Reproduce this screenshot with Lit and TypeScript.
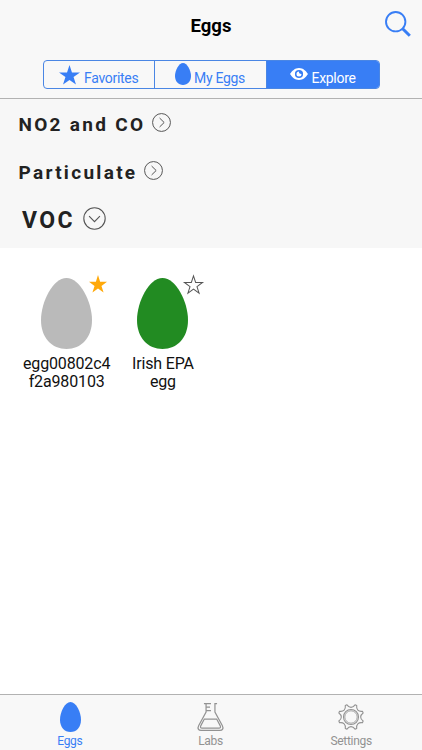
import { LitElement, html, svg, css } from "lit";
import { customElement, property } from "lit/decorators.js";

const EGG = "M25.5 0C39 0 51 24 51 42C51 60 40 71 25.5 71C11 71 0 60 0 42C0 24 12 0 25.5 0Z";

const polar = (r: number, deg: number) => {
  const a = (deg * Math.PI) / 180;
  return `${(14 + r * Math.cos(a)).toFixed(2)} ${(14 + r * Math.sin(a)).toFixed(2)}`;
};

// Eight blunt teeth joined by concave valleys.
const gearPath = () => {
  let d = "";
  for (let i = 0; i < 8; i++) {
    const t = 22.5 + i * 45;
    d += `${i ? "L" : "M"}${polar(12.8, t - 4)}L${polar(12.8, t + 4)}C${polar(9, t + 12)} ${polar(9, t + 33)} ${polar(12.8, t + 41)}`;
  }
  return d + "Z";
};

const STAR = "M10 0L12.36 7.1H20L13.85 11.5L16.18 18.6L10 14.25L3.82 18.6L6.15 11.5L0 7.1H7.64Z";

const glyphs: Record<string, { box: string; body: unknown }> = {
  egg: { box: "0 0 51 71", body: svg`<path d=${EGG} fill="currentColor"/>` },
  star: { box: "0 0 20 19", body: svg`<path d=${STAR} fill="currentColor"/>` },
  starOutline: {
    box: "-0.5 -1 21 20.5",
    body: svg`<path d=${STAR} fill="none" stroke="currentColor" stroke-width="1.1"/>`,
  },
  eye: {
    box: "0 0 18 12",
    body: svg`<path fill="currentColor" fill-rule="evenodd" d="M9 0C4.8 0 2 3 0 6C2 9 4.8 12 9 12S16 9 18 6C16 3 13.2 0 9 0ZM9 1.9A4.1 4.1 0 1 1 9 10.1A4.1 4.1 0 1 1 9 1.9Z"/><path fill="currentColor" d="M9 3.5C8.6 4.6 9.4 6 11.5 6A2.5 2.5 0 1 1 9 3.5Z"/>`,
  },
  search: {
    box: "0 0 26 26",
    body: svg`<g fill="none" stroke="currentColor"><circle cx="10.7" cy="10.7" r="9.7" stroke-width="1.9"/><path d="M17.7 17.7L24.8 24.8" stroke-width="3"/></g>`,
  },
  right: {
    box: "0 0 20 20",
    body: svg`<g fill="none" stroke="currentColor" stroke-width="1.05"><circle cx="10" cy="10" r="9.4"/><path d="M8 5.3L12.8 10L8 14.7"/></g>`,
  },
  down: {
    box: "0 0 20 20",
    body: svg`<g fill="none" stroke="currentColor" stroke-width="0.95"><circle cx="10" cy="10" r="9.3"/><path d="M5.3 8L10 12.8L14.7 8"/></g>`,
  },
  flask: {
    box: "0 0 28 28",
    body: svg`<g fill="none" stroke="currentColor" stroke-width="1.25"><path d="M7.2 .7H9.4V9L1.8 22.5C.2 25.5 1.5 27.4 4.3 27.4H23.7C26.5 27.4 27.8 25.5 26.2 22.5L18.6 9V.7H20.8"/><path d="M9.4 .7H14.5M9.4 4.2H13.5M9.4 7.7H14.5"/><path d="M7.6 16H20.4L24 22.6C24.8 24.3 24.3 25.2 22.8 25.2H5.2C3.7 25.2 3.2 24.3 4 22.6Z"/></g>`,
  },
  gear: {
    box: "0 0 28 28",
    body: svg`<g fill="none" stroke="currentColor" stroke-width="1.1" stroke-linejoin="round"><path d=${gearPath()}/><circle cx="14" cy="14" r="7.5"/><circle cx="14" cy="14" r="6.2" stroke-width="0.8"/></g>`,
  },
};

@customElement("ui-glyph")
class UiGlyph extends LitElement {
  @property() name = "egg";
  static styles = css`
    :host { display: block; flex: none; }
    .art { display: block; width: 100%; height: 100%; overflow: visible; }
  `;
  render() {
    const g = glyphs[this.name];
    return html`<svg class="art" viewBox=${g.box} preserveAspectRatio="none">${g.body}</svg>`;
  }
}

@customElement("egg-card")
class EggCard extends LitElement {
  @property() tone = "offline";
  @property({ type: Array }) lines: string[] = [];
  @property({ type: Boolean }) starred = false;
  static styles = css`
    :host { display: flex; flex-direction: column; align-items: center; width: 96.3px; }
    .picture { position: relative; width: 51px; height: 71px; }
    .egg { width: 51px; height: 71px; }
    .offline { color: #bababa; }
    .online { color: #228b22; }
    .star { position: absolute; left: 48px; top: -3px; width: 18px; height: 18px; color: #ffa90a; }
    .hollow { width: 19px; height: 19px; left: 47px; top: -3.5px; color: #555; }
    .name { margin-top: 6px; font-size: 16px; line-height: 18px; letter-spacing: -0.15px; text-align: center; white-space: nowrap; }
  `;
  render() {
    return html`
      <div class="picture">
        <ui-glyph class="egg ${this.tone}" name="egg"></ui-glyph>
        <ui-glyph class="star ${this.starred ? "" : "hollow"}" name=${this.starred ? "star" : "starOutline"}></ui-glyph>
      </div>
      <div class="name">${this.lines.map((l) => html`<div>${l}</div>`)}</div>
    `;
  }
}

@customElement("app-root")
class AppRoot extends LitElement {
  static styles = css`
    * { box-sizing: border-box; }
    :host {
      display: flex; flex-direction: column; width: 422px; height: 750px; overflow: hidden;
      background: #fff; color: #111; font-family: Roboto, sans-serif;
    }
    .header { height: 99px; background: #f8f8f8; border-bottom: 1px solid #b2b2b2; }
    .bar { display: grid; grid-template-columns: 1fr auto 1fr; height: 60px; padding-top: 11px; }
    .title { grid-column: 2; margin: 3px 0 0; font-size: 18.5px; line-height: 24px; font-weight: 700; color: #000; }
    .search { justify-self: end; width: 26px; height: 26px; margin-right: 11px; color: #387ef5; }
    .segments {
      display: grid; grid-template-columns: 111px 112px 1fr; width: 337px; height: 29px; margin-left: 43px;
      border: 1px solid #4a86e4; border-radius: 4px; overflow: hidden; color: #387ef5;
    }
    .segment { display: flex; font-size: 14px; line-height: 16px; letter-spacing: -0.3px; white-space: nowrap; }
    .segment:not(:last-child) { border-right: 1px solid #4a86e4; }
    .label { margin-top: 9px; }
    .active { background: #387ef5; color: #fff; }
    .favorites { padding-left: 15px; }
    .mine { padding-left: 20px; }
    .explore { padding-left: 23px; }
    .seg-star { width: 21px; height: 20px; margin: 3.5px 4px 0 0; }
    .seg-egg { width: 16px; height: 22px; margin: 2px 3px 0 0; }
    .seg-eye { width: 18px; height: 12px; margin: 7px 3.5px 0 0; }
    .groups { height: 149px; background: #f7f7f7; }
    .group { display: flex; align-items: center; height: 48px; padding-left: 18.5px; color: #222; }
    .group-name { font-size: 19px; font-weight: 700; letter-spacing: 2.3px; line-height: 24px; margin-top: 3px; }
    .chevron { width: 19px; height: 19px; margin: -2px 0 0 6.3px; color: #555; }
    .open { padding-left: 22px; }
    .open .group-name { font-size: 23px; letter-spacing: 2.4px; margin-top: 4px; }
    .open .chevron { width: 23px; height: 23px; margin: -1px 0 0 8px; }
    .eggs { display: flex; flex: 1; padding: 30px 0 0 18.5px; }
    .tabs { display: grid; grid-template-columns: 1fr 1fr 1fr; height: 56px; background: #f8f8f8; border-top: 1px solid #b2b2b2; }
    .tab { display: flex; flex-direction: column; align-items: center; color: #929292; font-size: 12px; line-height: 14px; letter-spacing: -0.3px; padding-top: 7px; }
    .tab-label { margin-top: auto; padding: 0 1px 2px 0; }
    .selected { color: #387ef5; }
    .tab-egg { width: 21px; height: 30px; }
    .tab-flask { width: 27px; height: 28px; margin-top: 1px; }
    .tab-gear { width: 28px; height: 28px; margin: 1px 1px 0 0; }
  `;

  private groups = [
    { name: "NO2 and CO", open: false },
    { name: "Particulate", open: false },
    { name: "VOC", open: true },
  ];

  render() {
    return html`
      <header class="header">
        <div class="bar">
          <span></span>
          <h1 class="title">Eggs</h1>
          <ui-glyph class="search" name="search"></ui-glyph>
        </div>
        <nav class="segments">
          <div class="segment favorites"><ui-glyph class="seg-star" name="star"></ui-glyph><span class="label">Favorites</span></div>
          <div class="segment mine"><ui-glyph class="seg-egg" name="egg"></ui-glyph><span class="label">My Eggs</span></div>
          <div class="segment explore active"><ui-glyph class="seg-eye" name="eye"></ui-glyph><span class="label">Explore</span></div>
        </nav>
      </header>
      <section class="groups">
        ${this.groups.map((g) => html`
          <div class="group ${g.open ? "open" : ""}">
            <span class="group-name">${g.name}</span>
            <ui-glyph class="chevron" name=${g.open ? "down" : "right"}></ui-glyph>
          </div>`)}
      </section>
      <main class="eggs">
        <egg-card tone="offline" starred .lines=${["egg00802c4", "f2a980103"]}></egg-card>
        <egg-card tone="online" .lines=${["Irish EPA", "egg"]}></egg-card>
      </main>
      <footer class="tabs">
        <div class="tab selected"><ui-glyph class="tab-egg" name="egg"></ui-glyph><span class="tab-label">Eggs</span></div>
        <div class="tab"><ui-glyph class="tab-flask" name="flask"></ui-glyph><span class="tab-label">Labs</span></div>
        <div class="tab"><ui-glyph class="tab-gear" name="gear"></ui-glyph><span class="tab-label">Settings</span></div>
      </footer>
    `;
  }
}
